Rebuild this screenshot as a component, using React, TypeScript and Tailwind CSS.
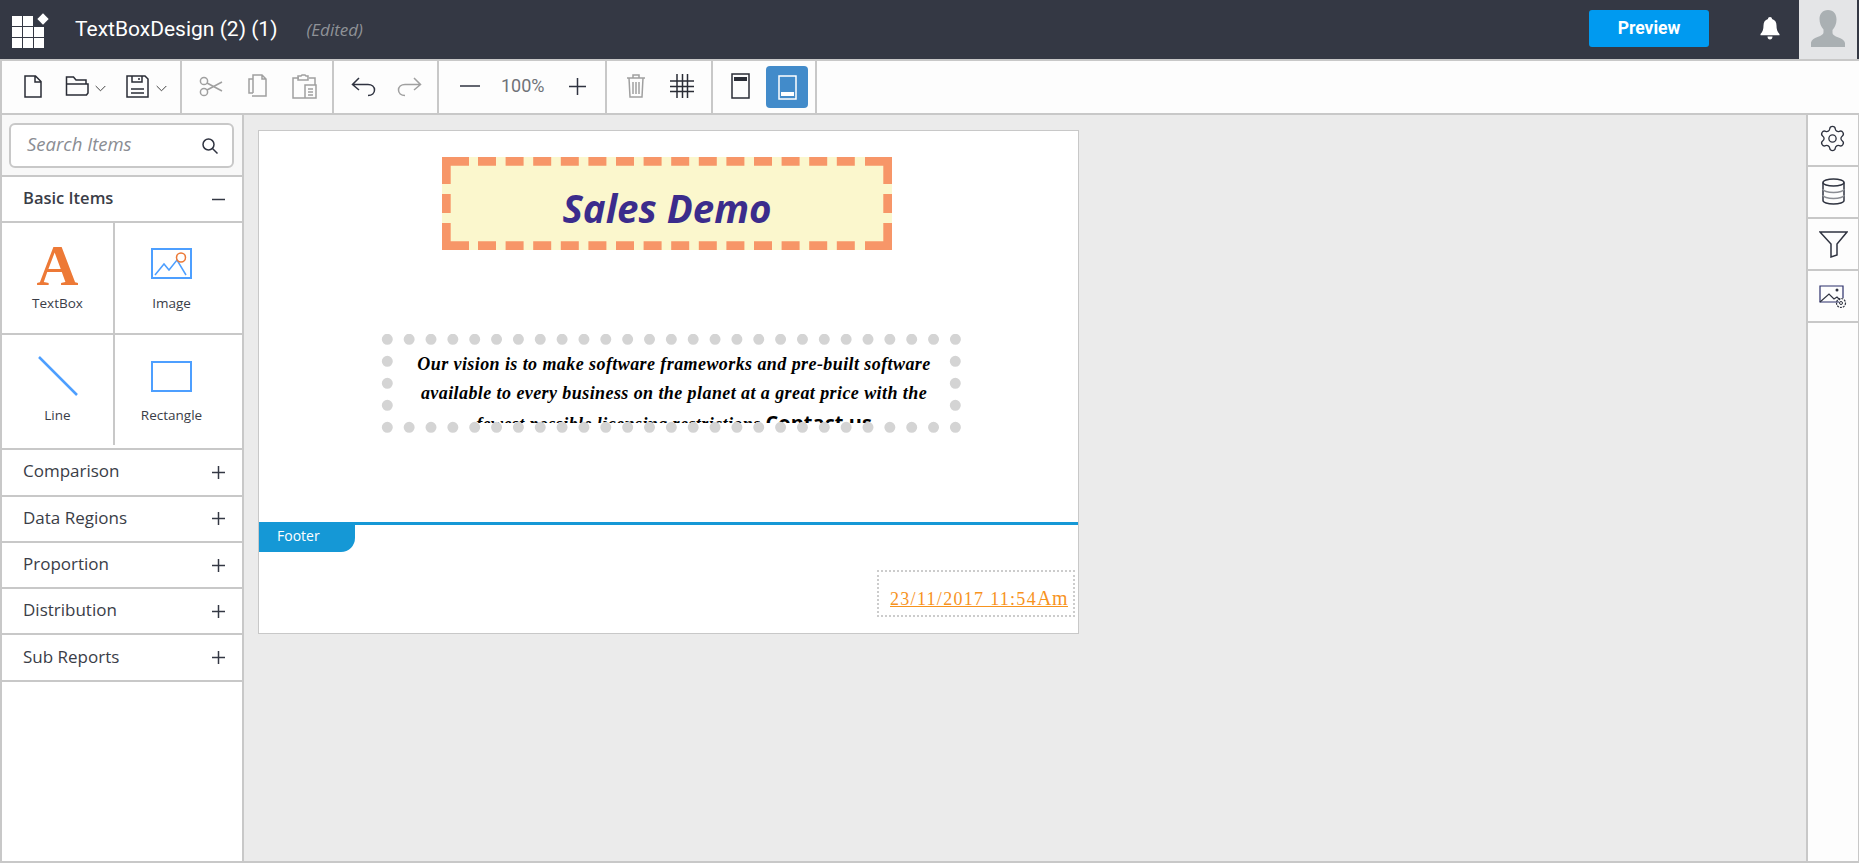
import React from "react";
import { Settings } from "lucide-react";

const sans = "font-['Open_Sans','Noto_Sans',sans-serif]";
const robo = "font-['Roboto',sans-serif]";

function Ic({ w, h, cn, children }: { w: number; h: number; cn?: string; children: React.ReactNode }) {
  return (
    <svg width={w} height={h} viewBox={`0 0 ${w} ${h}`} fill="none" stroke="currentColor" strokeWidth="1.5" className={"block shrink-0 " + (cn ?? "")}>
      {children}
    </svg>
  );
}

const Chevron = ({ cn }: { cn?: string }) => (
  <Ic w={11} h={7} cn={"text-[#444] " + (cn ?? "")}>
    <path d="M.7 1l4.8 4.8L10.3 1" strokeWidth="1" />
  </Ic>
);

function Toolbar() {
  return (
    <div className="flex h-[54px] bg-[#fdfdfd] border-l-2 border-b-2 border-[#c8c8c8]">
      <div className="w-[178px] flex items-center pb-[2px] border-r-2 border-[#c8c8c8] box-content">
        <Ic w={18} h={23} cn="ml-[22px] text-[#2a2d36]">
          <path d="M1 1h10.5L17 6.5V22H1zM11 1v6h6" />
        </Ic>
        <Ic w={24} h={22} cn="ml-[23px] text-[#2a2d36]">
          <path d="M1.500 20V2h7l2.500 3h10v4M1.500 20V9h21.500v9l-1.500 2z" />
        </Ic>
        <Chevron cn="ml-[6px] mt-[4px]" />
        <Ic w={23} h={23} cn="ml-[20px] text-[#2a2d36]">
          <path d="M1 1h18l3 3v18H1zM6 1v6h10V1M13 3v2M5 14h13M5 18h13" />
        </Ic>
        <Chevron cn="ml-[7px] mt-[4px]" />
      </div>
      <div className="w-[150px] flex items-center pb-[2px] border-r-2 border-[#c8c8c8] box-content text-[#a0a0a0]">
        <Ic w={24} h={21} cn="ml-[17px]">
          <circle cx="5" cy="5" r="3.6" />
          <circle cx="5" cy="16" r="3.6" />
          <path d="M8 7l15 8M8 14l15-8" />
        </Ic>
        <Ic w={20} h={24} cn="ml-[25px]">
          <path d="M5 19V1h9l4 4v17H4M14 1v4h4M5 19H1V5h4" />
        </Ic>
        <Ic w={25} h={25} cn="ml-[24px]">
          <path d="M7 4H1v20h12M17 4h6v7M6 2h3l1-1h3l1 1h2v4H6zM13 11h11v13H13zM16 15h5M16 18h5M16 21h5" />
        </Ic>
      </div>
      <div className="w-[103px] flex items-center pb-[2px] border-r-2 border-[#c8c8c8] box-content">
        <Ic w={25} h={21} cn="ml-[17px] text-[#2f3340]">
          <path d="M8 2L1.5 8.5 8 14M2 8.5h15c4 0 6.5 2.500 6.500 5.500S21 19.500 17 19.500" />
        </Ic>
        <Ic w={25} h={21} cn="ml-[21px] text-[#a0a0a0]">
          <path d="M17 2l6.500 6.500L17 14M23 8.500H8c-4 0-6.500 2.500-6.500 5.500S4 19.500 8 19.500" />
        </Ic>
      </div>
      <div className="w-[166px] flex items-center pb-[2px] border-r-2 border-[#c8c8c8] box-content">
        <Ic w={20} h={2} cn="ml-[21px] text-[#2f3340]">
          <path d="M0 1h20" />
        </Ic>
        <span className={robo + " ml-[21px] w-[46px] text-[18px] text-[#6f7278] leading-none"}>100%</span>
        <Ic w={17} h={17} cn="ml-[22px] text-[#2f3340]">
          <path d="M0 8.500h17M8.500 0v17" />
        </Ic>
      </div>
      <div className="w-[104px] flex items-center pb-[2px] border-r-2 border-[#c8c8c8] box-content">
        <Ic w={18} h={24} cn="ml-[20px] text-[#a0a0a0]">
          <path d="M0 4h18M2 4l1 19h12l1-19M6 4V1h6v3M6 8v12M9 8v12M12 8v12" />
        </Ic>
        <Ic w={24} h={24} cn="ml-[25px] text-[#2a2d36]">
          <path d="M0 7h24M0 12.500h24M0 17.500h24M7 0v24M12.500 0v24M17.500 0v24" />
        </Ic>
      </div>
      <div className="w-[102px] flex items-center border-r-2 border-[#c8c8c8] box-content">
        <Ic w={19} h={26} cn="ml-[18px] text-[#2a2d36] -mt-[2px]">
          <rect x="1" y="1" width="17" height="24" />
          <rect x="3" y="4" width="13" height="4" fill="currentColor" stroke="none" />
        </Ic>
        <div className="ml-[16px] w-[42px] h-[42px] rounded-[4px] bg-[#428bca] flex items-center justify-center text-white">
          <Ic w={19} h={25}>
            <rect x="1" y="1" width="17" height="23" />
            <rect x="3" y="17" width="13" height="4" fill="currentColor" stroke="none" />
          </Ic>
        </div>
      </div>
    </div>
  );
}

function Header() {
  return (
    <header className="flex h-[61px] bg-[#343844] border-b-2 border-[#c8c8c8] items-stretch">
      <div className="relative w-[51px] ml-[12px] mt-[16px] shrink-0">
        <div className="grid grid-cols-[10px_10px_10px] grid-rows-[10px_10px_10px] gap-[1px]">
          <div className="bg-white" />
          <div className="bg-white" />
          <div />
          <div className="bg-white" />
          <div className="bg-white" />
          <div className="bg-white" />
          <div className="bg-white" />
          <div className="bg-white" />
          <div className="bg-white" />
        </div>
        <div className="absolute left-[27px] top-[-1px] w-[8px] h-[8px] rotate-45 bg-white" />
      </div>
      <div className={robo + " ml-[12px] text-[21px] text-white self-center"}>TextBoxDesign (2) (1)</div>
      <div className={sans + " ml-[29px] text-[17px] italic text-[#8f9297] self-center"}>(Edited)</div>
      <div className="flex-1" />
      <button className={robo + " w-[120px] h-[37px] mt-[10px] rounded-[3px] bg-[#009af0] text-white font-bold text-[17.5px]"}>Preview</button>
      <svg width="20" height="23" viewBox="0 0 20 23" className="ml-[51px] mt-[17px] text-white">
        <path fill="currentColor" d="M10 0c1.300 0 2 .8 2 2 3 .8 4.500 3.200 4.500 6.500 0 3.500.7 6.500 3 8.500v1.200H.5V17c2.300-2 3-5 3-8.500C3.500 5.200 5 2.800 8 2c0-1.200.7-2 2-2zM7.500 19.500h5c0 1.800-1 3-2.500 3s-2.500-1.200-2.500-3z" />
      </svg>
      <div className="ml-[19px] w-[58px] bg-[#e4e5e7] flex items-start justify-center">
        <svg width="34" height="38" viewBox="0 0 34 38" className="mt-[10px] text-[#aab0b3]">
          <path fill="currentColor" d="M17 0c5.500 0 8.500 4 8.500 9.500 0 4-1.500 8-4 10.500v3c0 1.500 2 3 6 4.500 3.500 1.300 6 3 6.500 5.500V37H0v-4.500c.5-2.500 3-4.200 6.500-5.500 4-1.500 6-3 6-4.500v-3c-2.500-2.500-4-6.500-4-10.500C8.500 4 11.500 0 17 0z" />
        </svg>
      </div>
      <div className="w-[2px] bg-[#343844]" />
    </header>
  );
}

function AccRow({ label, bold, minus }: { label: string; bold?: boolean; minus?: boolean }) {
  return (
    <div className="h-[46.3px] flex items-center justify-between pl-[21px] pr-[17px] border-b-2 border-[#c8c8c8] bg-white">
      <span className={sans + " leading-none text-[#3a3d47] " + (bold ? "-mt-[2px] font-semibold text-[16.5px]" : "-mt-[3px] text-[17px]")}>{label}</span>
      <Ic w={13} h={13} cn="text-[#343844]">
        <path d="M0 6.500h13" />
        {!minus && <path d="M6.500 0v13" />}
      </Ic>
    </div>
  );
}

function Tile({ label, right, icon }: { label: string; right?: boolean; icon: React.ReactNode }) {
  return (
    <div className={"flex flex-col items-center bg-white h-[110px] " + (right ? "w-[113px]" : "border-r-2 border-[#c8c8c8]")}>
      <div className="h-[62px] w-full flex items-end justify-center">{icon}</div>
      <div className={sans + " mt-[7px] text-[13.5px] text-[#3a3d47] leading-[22px]"}>{label}</div>
    </div>
  );
}

function Sidebar() {
  return (
    <aside className="w-[244px] shrink-0 border-l-2 border-r-2 border-[#c8c8c8] bg-white flex flex-col">
      <div className="h-[62px] bg-[#f8f8f8] border-b-2 border-[#c8c8c8] pl-[7px] pr-[8px] pt-[8px]">
        <div className="h-[45px] rounded-[6px] border-2 border-[#c8c8c8] bg-white flex items-center justify-between pl-[16px] pr-[14px]">
          <span className={sans + " italic text-[18.5px] text-[#8a8d93] -mt-[4px]"}>Search Items</span>
          <Ic w={16} h={16} cn="text-[#2f3340]">
            <circle cx="6.500" cy="6.500" r="5.500" />
            <path d="M10.500 10.500L15.500 15.500" />
          </Ic>
        </div>
      </div>
      <AccRow label="Basic Items" bold minus />
      <div className="border-b-2 border-[#c8c8c8] h-[227px]">
        <div className="border-b-2 border-[#c8c8c8] grid grid-cols-[113px_1fr] h-[112px]">
          <Tile
            label="TextBox"
            icon={<span className="font-['Liberation_Serif',serif] font-bold text-[58px] leading-[54px] h-[46px] text-[#ed7936]">A</span>}
          />
          <Tile
            label="Image"
            right
            icon={
              <svg width="41" height="31" viewBox="0 0 41 31" className="mb-[6px]" fill="none">
                <rect x="1" y="1" width="39" height="29" stroke="#4d9fff" strokeWidth="2" />
                <path d="M4 27l9-11 5 6 8-10 9 15" stroke="#4d9fff" strokeWidth="1.500" />
                <circle cx="30" cy="9.500" r="4.500" stroke="#ed7936" strokeWidth="1.500" />
              </svg>
            }
          />
        </div>
        <div className="grid grid-cols-[113px_1fr] h-[110px]">
          <Tile
            label="Line"
            icon={
              <svg width="40" height="40" viewBox="0 0 40 40" className="mb-[1px]">
                <path d="M1 1l38 38" stroke="#4d9fff" strokeWidth="2.500" />
              </svg>
            }
          />
          <Tile
            label="Rectangle"
            right
            icon={
              <svg width="41" height="31" viewBox="0 0 41 31" fill="none" className="mb-[5px]">
                <rect x="1" y="1" width="39" height="29" stroke="#4d9fff" strokeWidth="2" />
              </svg>
            }
          />
        </div>
      </div>
      <AccRow label="Comparison" />
      <AccRow label="Data Regions" />
      <AccRow label="Proportion" />
      <AccRow label="Distribution" />
      <AccRow label="Sub Reports" />
    </aside>
  );
}

function Rail() {
  return (
    <aside className="w-[53px] shrink-0 border-l-2 border-r border-[#c8c8c8] bg-[#fdfdfd] flex flex-col text-[#2f3340]">
      <div className="h-[52px] border-b-2 border-[#c8c8c8] flex items-center justify-center">
        <Settings size={29} strokeWidth={1.1} className="-mt-[3px] -ml-[2px]" />
      </div>
      <div className="h-[52px] border-b-2 border-[#c8c8c8] flex items-center justify-center">
        <Ic w={23} h={27} cn="-mt-[2px]">
          <ellipse cx="11.500" cy="4.500" rx="10.500" ry="3.500" strokeWidth="1.500" />
          <path d="M1 4.500v18c0 2 4.700 3.500 10.500 3.500S22 24.500 22 22.500v-18" />
          <path d="M1 11c0 2 4.700 3.500 10.500 3.500S22 13 22 11M1 17c0 2 4.700 3.500 10.500 3.500S22 19 22 17" stroke="#8a8d93" />
        </Ic>
      </div>
      <div className="h-[52px] border-b-2 border-[#c8c8c8] flex items-center justify-center">
        <Ic w={29} h={27}>
          <path d="M1 1h27L18 13v11l-6 2V13z" />
        </Ic>
      </div>
      <div className="h-[52px] border-b-2 border-[#c8c8c8] flex items-center justify-center">
        <Ic w={28} h={23} cn="mt-[1px]">
          <path d="M20 17H1V1h23v12" strokeWidth="1.200" stroke="#2b2f6a" />
          <path d="M1 17l9-8 5 5 3-2 3 3" strokeWidth="1.200" />
          <circle cx="18" cy="5" r="1.500" fill="currentColor" stroke="none" />
          <circle cx="22" cy="18" r="4.500" strokeWidth="1.200" strokeDasharray="2 1" />
          <circle cx="22" cy="18" r="1.500" strokeWidth="1" />
        </Ic>
      </div>
    </aside>
  );
}

function DashFrame() {
  return (
    <svg width="450" height="93" viewBox="0 0 450 93" className="absolute inset-0" fill="none" stroke="#f79668" strokeWidth="8.700">
      <path d="M4.350 27V4.350H27M423 4.350h22.650V27M445.650 66v22.650H423M27 88.650H4.350V66" />
      <path d="M36 4.350H414M36 88.650H414" strokeDasharray="18 9.600" />
      <path d="M4.350 37V56M445.650 37V56" />
    </svg>
  );
}

function DotFrame() {
  return (
    <svg width="581" height="99" viewBox="0 0 581 99" className="absolute inset-0" fill="none" stroke="#d4d4d4" strokeWidth="11" strokeLinecap="round">
      <path d="M7.300 5.300H575.400M7.300 93.300H575.400" strokeDasharray="0 21.850" />
      <path d="M7.300 27.300V71.400M575.300 27.300V71.400" strokeDasharray="0 22" />
    </svg>
  );
}

function Report() {
  return (
    <div className="w-[821px] h-[504px] ml-[14px] mt-[15px] bg-white border border-[#c8c8c8] flex flex-col">
      <div className="h-[391px] flex flex-col">
        <div className="relative mt-[26px] ml-[183px] w-[450px] h-[93px] bg-[#fbf7cd] flex items-center justify-center">
          <span className="mt-[9px] font-['Open_Sans',sans-serif] font-bold italic text-[38.500px] leading-none text-[#3b2c8c]">Sales Demo</span>
          <DashFrame />
        </div>
        <div className="relative mt-[84px] ml-[121px] w-[581px] h-[99px]">
          <div className="h-[89px] overflow-hidden text-center font-['Liberation_Serif',serif] font-bold italic text-[18px] leading-[29px] text-black pt-[16px] pl-[7px] tracking-[0.42px]">
            <div>Our vision is to make software frameworks and pre-built software</div>
            <div>available to every business on the planet at a great price with the</div>
            <div>
              fewest possible licensing restrictions <span className="font-['Open_Sans',sans-serif] text-[20px] tracking-normal not-italic">Contact us</span>
            </div>
          </div>
          <DotFrame />
        </div>
      </div>
      <div className="flex-1 flex flex-col border-t-[3px] border-[#1598d6]">
        <div className="w-[96px] h-[27px] bg-[#1598d6] rounded-br-[14px] text-white text-[14px] leading-[21px] pl-[18px] font-['Open_Sans',sans-serif]">Footer</div>
        <div className="mt-[18px] ml-[618px] w-[198px] h-[47px] border-2 border-dotted border-[#cccccc] font-['Liberation_Serif',serif] text-[18px] text-[#f7931e] underline pl-[11px] pt-[14px] leading-[24px] whitespace-nowrap tracking-[1.3px]">
          23/11/2017 11:54<span className="text-[20px] tracking-[0.5px]">Am</span>
        </div>
      </div>
    </div>
  );
}

export default function App() {
  return (
    <div className="w-[1859px] h-[863px] overflow-hidden flex flex-col bg-[#ebebeb] border-b-2 border-[#c8c8c8]">
      <Header />
      <Toolbar />
      <div className="flex-1 flex min-h-0">
        <Sidebar />
        <main className="flex-1 min-w-0">
          <Report />
        </main>
        <Rail />
      </div>
    </div>
  );
}
